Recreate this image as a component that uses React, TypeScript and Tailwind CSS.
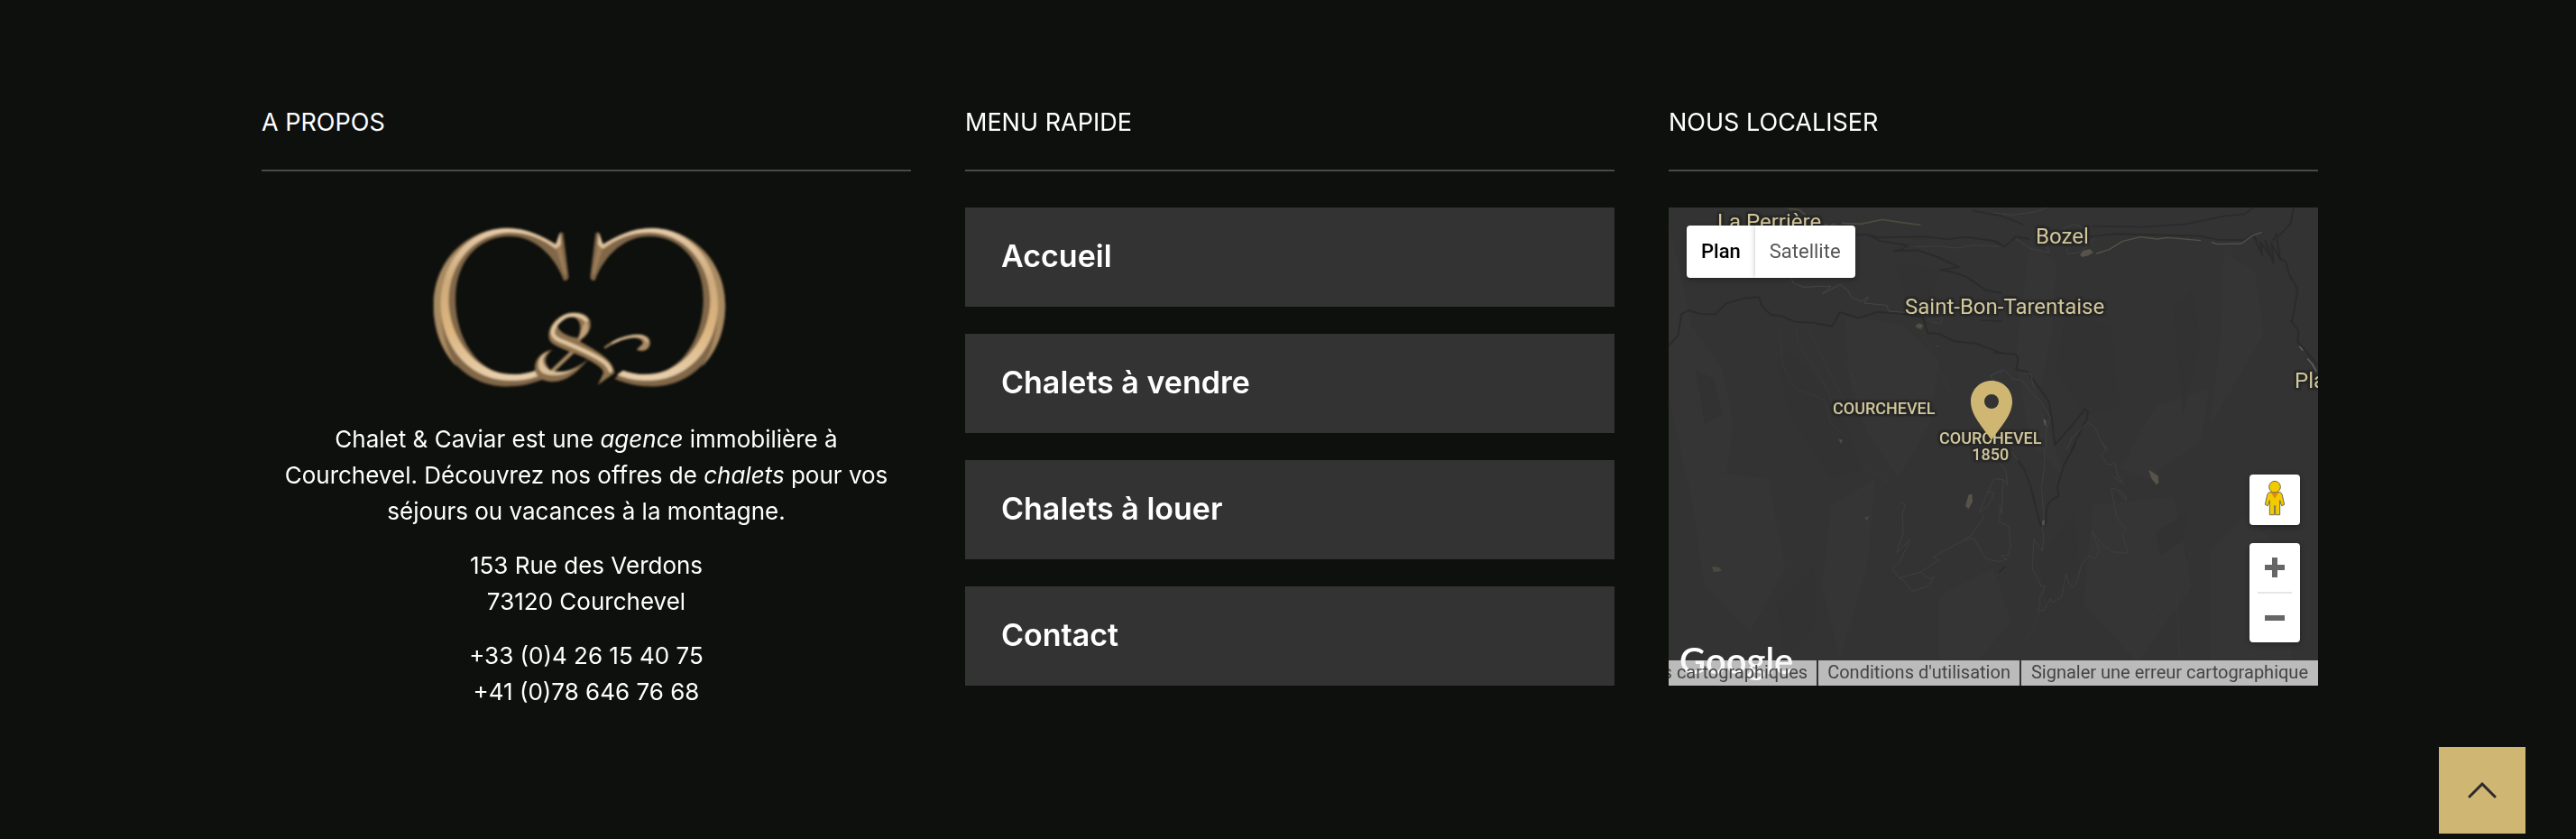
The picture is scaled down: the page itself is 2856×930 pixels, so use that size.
import type { ReactNode } from "react";

const menu = ["Accueil", "Chalets à vendre", "Chalets à louer", "Contact"];

function Column({ title, children }: { title: string; children: ReactNode }) {
  return (
    <section className="min-w-0">
      <h2 className="mb-10 border-b-2 border-[#4a4a48] pb-8 text-[27px] leading-10 uppercase">{title}</h2>
      {children}
    </section>
  );
}

function CRing() {
  return (
    <>
      <path
        fill="#816749"
        d="M449 58 Q455 48 463 56 L481 200 Q480 215 465 212 C430 120 360 66 285 66 C180 66 105 150 105 275 C105 400 175 520 285 524 C320 526 345 522 372 512 L400 540 C350 560 320 565 270 565 C130 562 32 440 32 295 C32 140 150 38 275 38 C340 38 395 66 440 92 Z"
      />
      <path
        fill="#a88a62"
        d="M200 55 C90 100 32 190 32 295 C32 380 60 450 110 500 C70 440 56 370 58 295 C62 190 110 100 200 55 Z"
      />
      <path
        fill="url(#gold)"
        d="M453 54 L456 92 Q450 104 438 108 C400 78 350 53 285 53 C170 56 86 150 82 275 C82 400 170 520 285 524 C320 526 345 522 372 512 L392 526 C350 542 320 546 280 545 C140 540 56 420 56 290 C58 150 150 40 275 39 C340 38 395 66 438 93 Z"
      />
      <path fill="#9c7d57" d="M440 108 L456 94 L475 195 L466 190 Z" />
    </>
  );
}

function Logo() {
  return (
    <svg viewBox="0 0 1080 600" className="h-[200px] w-[360px]" role="img" aria-label="C&C">
      <defs>
        <linearGradient id="gold" x1="0" y1="0" x2="0" y2="1">
          <stop offset="0" stopColor="#e6ccaa" />
          <stop offset="0.35" stopColor="#cfab7c" />
          <stop offset="0.65" stopColor="#dcb47e" />
          <stop offset="1" stopColor="#e8d0ae" />
        </linearGradient>
        <filter id="soft">
          <feGaussianBlur stdDeviation="2.5" />
        </filter>
      </defs>
      <g filter="url(#soft)">
        <CRing />
        <g transform="translate(1034 0) scale(-1 1)">
          <CRing />
        </g>
        <path d="M520 400 L492 452 L425 516" fill="none" stroke="#a88a64" strokeWidth="13" />
        <path
          fill="#8a6e4e"
          d="M427 442 C392 450 367 472 369 505 C370 535 398 551 435 549 C485 545 512 512 548 474 C515 497 490 516 445 518 C428 520 418 512 408 492 C400 475 408 458 427 442 Z"
        />
        <path
          fill="#dcc19a"
          d="M420 447 C392 454 378 475 381 500 C384 518 402 528 435 528 C470 527 492 515 520 494 C492 512 470 517 440 516 C418 516 398 500 396 480 C396 465 405 455 420 447 Z"
        />
        <path
          fillRule="evenodd"
          fill="#90734f"
          d="M515 414 C548 396 560 370 552 345 C540 316 490 312 455 332 C415 356 405 400 425 420 C445 438 500 452 545 475 C580 495 596 505 597 520 L578 560 L634 520 C630 480 592 456 515 414 Z M513 404 C480 400 440 380 445 358 C450 338 490 325 508 340 C524 354 522 380 513 404 Z"
        />
        <path
          fill="none"
          stroke="#e2c8a2"
          strokeWidth="13"
          strokeLinecap="round"
          d="M540 345 C520 322 480 322 456 342 C420 372 420 398 450 411 C500 432 560 455 600 484 Q616 498 620 512"
        />
        <path fill="#c0a079" d="M515 412 C520 380 530 365 538 345 C556 370 545 395 515 412 Z" />
        <path
          fill="#a98a63"
          d="M599 434 C640 402 690 388 725 393 C752 398 758 420 747 436 C738 448 722 448 708 444 C712 434 726 430 728 420 C726 404 700 402 680 406 C650 412 625 424 601 440 Z"
        />
        <path fill="none" stroke="#e2c8a2" strokeWidth="6" d="M625 421 C660 400 700 393 726 399 Q742 404 743 418" />
      </g>
    </svg>
  );
}

function Terrain() {
  return (
    <svg
      viewBox="0 0 720 530"
      preserveAspectRatio="xMidYMid slice"
      className="absolute inset-0 size-full"
      fill="none"
      strokeLinejoin="round"
      aria-hidden="true"
    >
      {/* relief shading */}
      <g fill="#353535">
        <path d="M0 20 L10 60 L25 130 L60 180 L72 240 L60 330 L20 300 L0 210 Z" />
        <path d="M195 120 L260 130 L300 170 L290 240 L255 300 L220 250 L200 190 Z" />
        <path d="M400 40 L430 60 L425 140 L410 210 L440 300 L400 260 L385 160 Z" />
        <path d="M615 50 L650 70 L660 140 L625 200 L600 240 L612 140 Z" />
        <path d="M540 220 L600 200 L590 260 L530 300 L500 290 Z" />
        <path d="M20 290 L110 300 L130 400 L90 470 L40 420 Z" />
        <path d="M180 330 L230 300 L220 400 L190 500 L170 420 Z" />
        <path d="M300 430 L360 400 L380 460 L340 505 L300 500 Z" />
        <path d="M470 330 L560 320 L580 420 L520 505 L460 440 Z" />
        <path d="M600 380 L640 340 L700 400 L690 500 L600 505 Z" />
      </g>
      <g fill="#323232">
        <path d="M120 170 L135 160 L190 220 L215 290 L180 300 L135 230 Z" />
        <path d="M250 60 L300 70 L290 100 L260 95 Z" />
        <path d="M440 120 L490 130 L500 220 L460 230 L430 180 Z" />
        <path d="M560 110 L580 90 L590 150 L570 230 Z" />
        <path d="M120 440 L160 400 L165 460 L130 500 Z" />
        <path d="M410 390 L450 340 L455 400 L420 440 Z" />
        <path d="M540 360 L575 340 L570 370 L545 385 Z" />
        <path d="M30 180 L50 190 L60 230 L40 240 Z" />
      </g>
      {/* north-west */}
      <g transform="scale(0.333333)">
        <g stroke="#2b2b2b" strokeWidth="6">
          <path d="M0 460 L32 425 L42 355 L65 342 L110 355 L155 355 L190 320 L250 302 L300 298 L312 330 L340 357 L375 360 L420 380 L480 383 L543 395 L570 348 L630 368 L695 347 L790 355 L845 365 L862 418 L900 420 L950 445 L1020 452 L1110 485" />
          <path d="M615 92 L660 90 L700 100 L850 97 L925 105 L990 98 L1085 112 L1110 125" />
          <path d="M670 95 L705 112 L795 125 L775 140 L750 145 L830 142 L895 165 L965 198 L905 208 L945 215 L990 230 L1055 275 L1110 285" />
          <path d="M1010 10 L1060 20 L1110 28 M1040 375 L1110 378" strokeWidth="5" />
        </g>
        <g stroke="#454545" strokeWidth="3">
          <path d="M410 235 L412 250 L450 265 L500 262 L540 262 L512 287 L570 256 L595 275 L610 300 L640 312 L665 297 L650 318 L725 325 L732 345 L800 350" />
          <path d="M860 372 L885 370 L912 368 L905 385 L870 380 M820 130 L900 128 L960 135 L1020 125 L1100 130" stroke="#3e3e3e" />
          <path d="M370 400 L378 520 L420 600 L520 640 L540 720 L600 770 M425 390 L430 450 L520 590 L560 690 M460 395 L545 570 L590 650 M590 520 L640 620 L680 500 M840 400 L900 540 L940 620" stroke="#383838" />
          <path d="M1110 540 L1070 560 L1085 580" />
        </g>
        <g stroke="#4d4a3e" strokeWidth="5">
          <path d="M575 52 L640 55 L710 40 L775 50 L838 58 M400 4 L435 8 L455 25" />
          <path d="M517 60 Q525 50 530 60 M540 60 Q548 48 556 60" stroke="#454545" />
        </g>
        <path fill="#524f43" d="M820 393 L835 385 L848 392 L838 405 L826 400 Z M565 770 L578 772 L574 787 Z M890 458 L897 459 L894 463 Z" />
      </g>
      {/* north-east */}
      <g transform="translate(360 0) scale(0.333333)">
        <g stroke="#2b2b2b" strokeWidth="6">
          <path d="M0 110 L38 130 L75 97 L120 105 M320 97 L410 88 L690 95 L745 107 L835 108 L862 92 L875 110" />
          <path d="M0 20 L60 40 L100 58 M330 62 L500 65 L640 55 L770 28 L835 22 L865 0" strokeWidth="5" />
          <path d="M868 95 L885 140 L895 158 L888 115 L920 160 L905 110 L932 185 L925 120 L955 175 L940 85 M925 110 L955 90 L990 50 L998 0" />
          <path d="M955 170 L972 180 L985 225 L1012 270 L1000 350 L992 380 L1015 410 L1012 445 L1080 525" />
          <path d="M0 482 L75 488 L83 502 L76 540 L110 545 L145 590 L185 645 L197 720 L205 790 L265 720 L305 670 L315 680 L310 705 L260 805" />
        </g>
        <g stroke="#3f3f3f" strokeWidth="3">
          <path d="M75 105 L120 135 L185 150 L180 130 M245 135 L248 155 L290 148 L340 100 M200 85 L270 55 L315 75" />
          <path d="M0 18 L60 25 L140 15 L180 0 M20 555 L38 540 L65 570 L95 575 L130 620 L155 640 L190 700 L175 740 L175 800" />
          <path d="M100 550 L125 555 L135 600 M245 805 L262 765 L315 715 L340 735 L360 780 L380 805" />
        </g>
        <g stroke="#55514a" strokeWidth="4">
          <path d="M343 153 L385 140 L430 112 L490 98 L545 105 L580 100 L690 110 M725 115 L745 122 L825 120 L860 95 L893 82" />
          <path d="M1018 462 L1030 476 M1045 503 L1060 520 L1075 545" stroke="#666" />
        </g>
        <path fill="#57534a" d="M288 157 L300 143 L322 138 L332 150 L315 160 L295 165 Z M165 703 L176 708 L175 728 L169 720 Z" />
      </g>
      {/* south */}
      <g transform="translate(220 260) scale(0.333333)">
        <g stroke="#2b2b2b" strokeWidth="6">
          <path d="M503 62 L525 95 L545 150 L562 220 L575 270 Q584 290 595 270 L597 220 Q605 190 638 180 L633 150 L655 75 L695 5" />
          <path d="M440 432 L460 413" />
        </g>
        <g stroke="#3e3e3e" strokeWidth="3">
          <path d="M110 202 L128 207 L118 240 L120 300 L98 368 L143 325 L108 400 L86 424 L105 450 L125 462 L150 497 L200 480 L225 448 L208 455 L178 433 L105 452 M178 433 L238 392 L220 382 L315 330 L345 312 L385 255 L385 240 M315 330 L355 320 L395 388 L435 398 L465 390 L445 378 L475 375 L470 355 L478 350 L472 280 L440 265 L442 210 L448 240 L453 125 L422 122 L405 160 L372 235 L400 215 L423 170 L400 165 M440 70 L462 95 L468 145 L455 125 M480 30 L500 60" />
          <path d="M590 20 L590 85 L580 150 L588 240 L583 285 L588 315 L583 362 L555 322 L550 420 L580 480 L590 478 L585 500 L575 515 L575 540 L565 558 L588 560 L610 520 L617 535 L648 515 L655 470 L663 440 L670 468 L685 485 L700 460 L712 410 L738 378 L760 387 L772 360 L748 297 L780 338 L815 365 L867 370 L850 305 L862 292 L830 250 L812 155 L825 155 L863 195 L860 180 L835 155" />
          <path d="M780 0 L795 25 L778 45 L800 75 L825 72 L833 110 L852 137 L820 115" />
          <path d="M530 660 L560 600 L575 560 M1080 360 L1030 520 L1040 720 M920 590 L970 560 L1000 500 M0 80 L70 135 M375 497 L430 442" stroke="#383838" />
        </g>
        <path fill="#57534a" d="M338 175 L349 173 L351 198 L338 222 L327 213 Z M937 92 L968 112 L970 135 L962 142 L945 120 Z M583 262 L591 258 L590 278 L582 275 Z" />
      </g>
      <path fill="#4a4940" d="M48 398 L56 399 L59 403 L50 404 Z M217 344 L222 342 L220 347 Z" />
    </svg>
  );
}

const placeName =
  "absolute whitespace-nowrap text-[#d1c79b] [text-shadow:0_0_3px_#262626,2px_2px_2px_#262626,-2px_-2px_2px_#262626,2px_-2px_2px_#262626,-2px_2px_2px_#262626]";

function MapPanel() {
  return (
    <div className="relative h-[530px] overflow-hidden bg-[#333333] font-[Roboto,sans-serif]">
      <Terrain />
      <span className={`${placeName} top-0 left-[54px] text-2xl leading-8`}>La Perrière</span>
      <span className={`${placeName} top-4 left-[407px] text-2xl leading-8`}>Bozel</span>
      <span className={`${placeName} top-[94px] left-[262px] text-2xl leading-8`}>Saint-Bon-Tarentaise</span>
      <span className={`${placeName} top-[176px] left-[694px] text-2xl leading-8`}>Plagny</span>
      <span className={`${placeName} top-[214px] left-[182px] text-lg leading-[18px] font-medium`}>COURCHEVEL</span>
      <span className={`${placeName} top-[247px] left-[300px] text-center text-lg leading-[18px] font-medium`}>
        COURCHEVEL
        <br />
        1850
      </span>
      <svg viewBox="0 0 46 66" className="absolute top-[192px] left-[335px] h-[66px] w-[46px]" role="img" aria-label="Chalet & Caviar">
        <path
          fillRule="evenodd"
          fill="#cfb673"
          d="M23 0 C10 0 0 10 0 23 C0 39 14 52 23 66 C32 52 46 39 46 23 C46 10 36 0 23 0 Z M23 15 a8 8 0 1 1 0 16 a8 8 0 1 1 0 -16 Z"
        />
      </svg>

      <div className="absolute top-5 left-5 flex h-[58px] overflow-hidden rounded-[4px] bg-white text-[22px] leading-none shadow-[0_2px_6px_rgba(0,0,0,0.3)]">
        <button type="button" className="px-4 font-medium text-black">
          Plan
        </button>
        <button type="button" className="px-4 text-[#565656] shadow-[0_0_6px_rgba(0,0,0,0.25)]">
          Satellite
        </button>
      </div>

      <div className="absolute right-5 bottom-12 flex w-14 flex-col gap-5">
        <button
          type="button"
          aria-label="Street View"
          className="h-14 rounded-[4px] bg-white shadow-[0_2px_6px_rgba(0,0,0,0.3)]"
        >
          <svg viewBox="0 0 168 168" className="size-14" aria-hidden="true">
            <path
              fill="#f3c900"
              stroke="#6f6b52"
              strokeWidth="3"
              strokeLinejoin="round"
              d="M67 59 H101 Q107 60 109 68 L116 100 L107 104 L101 86 V134 H86 V104 H83 V134 H67 V86 L61 104 L52 100 L59 68 Q61 60 67 59 Z"
            />
            <path fill="#e08a10" d="M72 60 H96 L84 80 Z" />
            <circle cx="84" cy="41" r="19" fill="#f3c900" stroke="#6f6b52" strokeWidth="3" />
          </svg>
        </button>
        <div className="flex h-[110px] flex-col items-center rounded-[4px] bg-white shadow-[0_2px_6px_rgba(0,0,0,0.3)]">
          <button type="button" aria-label="Zoom avant" className="flex h-[54px] w-full items-center justify-center">
            <svg viewBox="0 0 22 22" className="size-[22px]" aria-hidden="true">
              <path stroke="#666" strokeWidth="6" d="M0 11 H22 M11 0 V22" />
            </svg>
          </button>
          <div className="h-[2px] w-[38px] bg-[#e6e6e6]" />
          <button type="button" aria-label="Zoom arrière" className="flex h-[54px] w-full items-center justify-center">
            <svg viewBox="0 0 22 22" className="size-[22px]" aria-hidden="true">
              <path stroke="#666" strokeWidth="6" d="M0 11 H22" />
            </svg>
          </button>
        </div>
      </div>

      <a href="#google" className="absolute bottom-1 left-3 font-[Lato,sans-serif] text-[40px] leading-[48px] font-semibold text-white">
        Google
      </a>
      <div className="absolute inset-x-0 bottom-0 flex h-7 justify-end gap-[2px] text-xl leading-[26px] whitespace-nowrap text-[#444]">
        <span className="shrink-0 bg-[#f5f5f5]/70 px-[10px]">Données cartographiques</span>
        <a href="#conditions" className="shrink-0 bg-[#f5f5f5]/70 px-[10px]">
          Conditions d'utilisation
        </a>
        <a href="#signaler" className="shrink-0 bg-[#f5f5f5]/70 px-[11px]">
          Signaler une erreur cartographique
        </a>
      </div>
    </div>
  );
}

export default function App() {
  return (
    <footer className="min-h-screen bg-[#0e100d] pt-[116px] pr-5 pb-20 pl-6 font-[Inter,sans-serif] text-white">
      <div className="mx-auto grid max-w-[2280px] grid-cols-3 gap-[60px]">
        <Column title="A propos">
          <div className="flex flex-col items-center gap-5 pt-[10px] text-center text-[26px] leading-10">
            <Logo />
            <p className="px-4 pt-[7px]">
              Chalet & Caviar est une <em>agence</em> immobilière à Courchevel. Découvrez nos offres de <em>chalets</em> pour
              vos séjours ou vacances à la montagne.
            </p>
            <address className="not-italic">
              153 Rue des Verdons
              <br />
              73120 Courchevel
            </address>
            <p>
              +33 (0)4 26 15 40 75
              <br />
              +41 (0)78 646 76 68
            </p>
          </div>
        </Column>
        <Column title="Menu rapide">
          <nav className="flex flex-col gap-[30px]">
            {menu.map((item) => (
              <a
                key={item}
                href="#menu"
                className="flex h-[110px] items-center bg-[#333333] px-10 pb-[2px] text-[34px] leading-10 font-semibold"
              >
                {item}
              </a>
            ))}
          </nav>
        </Column>
        <Column title="Nous localiser">
          <MapPanel />
        </Column>
      </div>
      <button
        type="button"
        aria-label="Haut de page"
        className="fixed right-14 bottom-[6px] flex size-24 items-center justify-center bg-[#cfb673]"
      >
        <svg viewBox="0 0 32 18" className="h-[18px] w-8" fill="none" aria-hidden="true">
          <path d="M2 16 L16 2 L30 16" stroke="#2b2b2b" strokeWidth="3" strokeLinecap="round" />
        </svg>
      </button>
    </footer>
  );
}
